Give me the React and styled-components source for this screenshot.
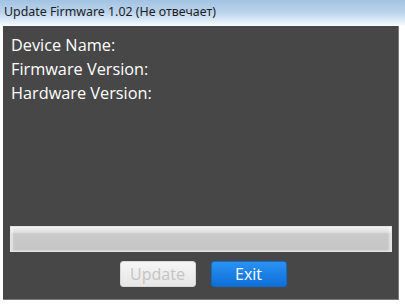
import React from 'react';
import styled, { createGlobalStyle } from 'styled-components';

const GlobalStyle = createGlobalStyle`
  html, body {
    margin: 0;
    padding: 0;
    background: #ffffff;
    overflow: hidden;
  }
`;

const Window = styled.div`
  display: flex;
  flex-direction: column;
  width: 405px;
  height: 305px;
  background: linear-gradient(to bottom, #a3c2e2 0px, #b9d3ec 12px, #dbeaf7 20px, #f4f9fd 25px, #ffffff 26px);
`;

const TitleBar = styled.div`
  height: 26px;
  padding: 5px 0 0 4px;
  box-sizing: border-box;
  font-family: "Noto Sans", "Open Sans", sans-serif;
  font-size: 12.4px;
  line-height: 14px;
  color: #1e1e1e;
  white-space: nowrap;
`;

const Panel = styled.div`
  display: flex;
  flex-direction: column;
  margin-left: 3px;
  width: 396px;
  height: 274px;
  box-sizing: border-box;
  background: #474747;
  border-right: 1px solid #7a7a7a;
  border-bottom: 1px solid #7a7a7a;
  padding: 7px 7px 12px 7px;
`;

const Info = styled.div`
  display: flex;
  flex-direction: column;
  flex: 1;
  padding-left: 1px;
`;

const Label = styled.div`
  font-family: "Open Sans", "Noto Sans", sans-serif;
  font-size: 16.3px;
  line-height: 24px;
  color: #ffffff;
`;

const Progress = styled.div`
  width: 382px;
  height: 26px;
  box-sizing: border-box;
  border: 1px solid #e4e4e4;
  background: linear-gradient(to bottom, #f0f0f0 0px, #e0e0e0 5px, #c9c9c9 7px, #c6c6c6 100%);
  box-shadow: inset 2px 0 2px rgba(255, 255, 255, 0.5), inset -2px 0 2px rgba(255, 255, 255, 0.5);
`;

const Buttons = styled.div`
  display: flex;
  justify-content: center;
  gap: 15px;
  margin-top: 9px;
  padding-left: 5px;
`;

const Button = styled.button`
  width: 76px;
  height: 26px;
  border-radius: 3px;
  font-family: "Open Sans", "Noto Sans", sans-serif;
  font-size: 16px;
  padding: 0;
  border: 1px solid ${p => (p.primary ? '#0d6cc9' : '#d6d6d6')};
  color: ${p => (p.primary ? '#ffffff' : '#c4c4c4')};
  background: ${p => (p.primary
    ? 'linear-gradient(to bottom, #2b92f3, #0c6fd9)'
    : 'linear-gradient(to bottom, #f5f5f5, #e6e6e6)')};
`;

const App = () => (
  <Window>
    <GlobalStyle />
    <TitleBar>Update Firmware 1.02 (Не отвечает)</TitleBar>
    <Panel>
      <Info>
        <Label>Device Name:</Label>
        <Label>Firmware Version:</Label>
        <Label>Hardware Version:</Label>
      </Info>
      <Progress />
      <Buttons>
        <Button disabled>Update</Button>
        <Button primary>Exit</Button>
      </Buttons>
    </Panel>
  </Window>
);

export default App;
